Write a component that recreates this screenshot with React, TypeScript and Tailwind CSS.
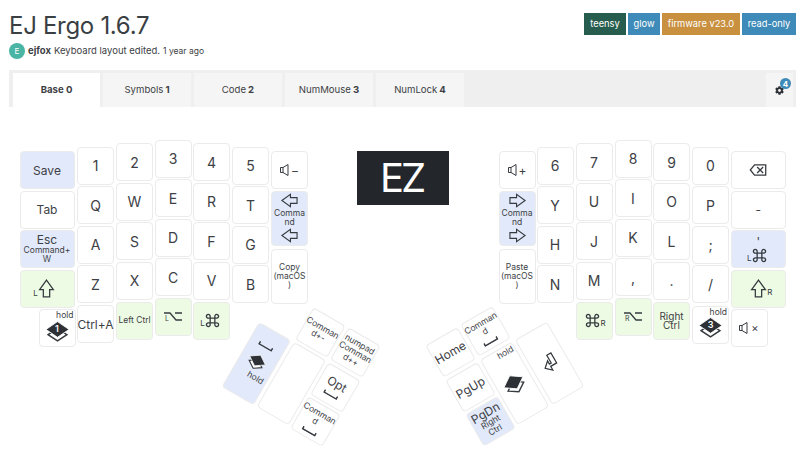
import React from "react";
import { FaCog } from "react-icons/fa";

type Tone = "plain" | "blue" | "green";

interface KeyDef {
  x: number;
  y: number;
  w?: number;
  h?: number;
  tone?: Tone;
  rot?: number;
  node?: React.ReactNode;
}

const KEY_W = 37;
const KEY_H = 38;

const toneClass: Record<Tone, string> = {
  plain: "bg-white",
  blue: "bg-[#e2e9fa]",
  green: "bg-[#eefbe4]",
};

const Ink = "#363b40";

const Arrow = ({ dir, size = 17 }: { dir: "left" | "right" | "up"; size?: number }) => {
  const rotate = dir === "left" ? 0 : dir === "right" ? 180 : 90;
  return (
    <svg width={size} height={size} viewBox="0 0 18 18" style={{ transform: `rotate(${rotate}deg)` }}>
      <path d="M1 9 10 2.5V6h7v6h-7v3.5z" fill="none" stroke={Ink} strokeWidth="1.2" />
    </svg>
  );
};

const Space = ({ w = 16 }: { w?: number }) => (
  <svg width={w} height="4" viewBox="0 0 16 4">
    <path d="M1 0v3h14V0" fill="none" stroke={Ink} strokeWidth="1.5" />
  </svg>
);

const Speaker = () => (
  <svg width="9" height="12" viewBox="0 0 9 12">
    <path d="M.5 3.5h2.5l5-3v11l-5-3H.5zM3 3.5v5" fill="none" stroke={Ink} strokeWidth="1" />
  </svg>
);

const Cmd = ({ size = 15 }: { size?: number }) => (
  <svg width={size} height={size} viewBox="0 0 16 16">
    <path
      d="M5.5 5.5h5v5h-5zM5.5 5.5H3.7a2 2 0 1 1 1.8-2zM10.5 5.5V3.7a2 2 0 1 1 2 1.8zM10.5 10.5h1.8a2 2 0 1 1-1.8 2zM5.5 10.5v1.8a2 2 0 1 1-2-1.8z"
      fill="none"
      stroke={Ink}
      strokeWidth="1.4"
    />
  </svg>
);

const Alt = ({ side }: { side: string }) => (
  <div className="relative">
    <svg className="block" width="18" height="9" viewBox="0 0 18 9">
      <path d="M0 1h6l6 7h6M11 1h7" fill="none" stroke={Ink} strokeWidth="1.3" />
    </svg>
    <span className="absolute left-[1px] top-[3px] text-[7px] leading-[7px]">{side}</span>
  </div>
);

const Layers = ({ n, size = 23 }: { n?: string; size?: number }) => (
  <div className="relative flex items-center justify-center" style={{ width: size, height: size }}>
    <svg width={size} height={size} viewBox="0 0 22 22">
      <path d="M2 15 11 9l9 6-9 6z" fill="#fff" stroke={Ink} strokeWidth="1.4" />
      <path d="M0 10 11 2.5 22 10l-11 7.5z" fill="#2d3136" stroke="#fff" strokeWidth="0.8" />
    </svg>
    {n && <span className="absolute top-[4px] text-[9px] leading-[11px] font-semibold text-white">{n}</span>}
  </div>
);

const Sub = ({ children }: { children: React.ReactNode }) => (
  <span className="text-[8px] leading-[9px] text-[#363b40]">{children}</span>
);

const Small = ({ children }: { children: React.ReactNode }) => (
  <span className="block whitespace-pre-line text-center text-[8.5px] leading-[9px]">{children}</span>
);

const Hold = () => <span className="absolute top-[1px] right-[1px] text-[8.5px] leading-[9px]">hold</span>;

const Key = ({ x, y, w = KEY_W, h = KEY_H, tone = "plain", rot = 0, node }: KeyDef) => (
  <div
    className={`absolute flex flex-col items-center justify-center rounded-[4px] border-[1.5px] border-[#ebebeb] text-[12px] leading-[15px] text-[#3d4145] ${toneClass[tone]}`}
    style={{ left: x, top: y - 107, width: w, height: h, transform: rot ? `rotate(${rot}deg)` : undefined }}
  >
    {node}
  </div>
);

// centre-based helper for the rotated thumb keys
const thumb = (cx: number, cy: number, rot: number, node?: React.ReactNode, tone: Tone = "plain", tall = false): KeyDef => {
  const w = 36.5;
  const h = tall ? 74.5 : 36.5;
  return { x: cx - w / 2, y: cy - h / 2, w, h, rot, tone, node };
};

const cols = [77, 116, 154.5, 193, 232];
const colsR = [536.5, 575.5, 614.5, 653, 692];
const stagger = [146.5, 143, 139.5, 143, 146.5];
const rowStep = 39.5;

const letterKeys = (xs: number[], rows: string[][]): KeyDef[] =>
  rows.flatMap((row, r) =>
    row.map((label, c) => ({
      x: xs[c],
      y: stagger[c] + r * rowStep,
      node: <span className="text-[14px]">{label}</span>,
    })),
  );

const keys: KeyDef[] = [
  // left hand
  { x: 19.5, y: 151, w: 55, tone: "blue", node: "Save" },
  { x: 19.5, y: 190.5, w: 55, node: "Tab" },
  {
    x: 19.5,
    y: 230,
    w: 55,
    tone: "blue",
    node: (
      <>
        <span className="leading-[12px]">Esc</span>
        <Small>{"Command+\nW"}</Small>
      </>
    ),
  },
  {
    x: 19.5,
    y: 269.5,
    w: 55,
    tone: "green",
    node: (
      <div className="flex items-end pr-[5px]">
        <Sub>L</Sub>
        <div className="-ml-[1px]"><Arrow dir="up" size={19} /></div>
      </div>
    ),
  },
  { x: 38.5, y: 309, node: <><Hold /><div className="mt-[4px]"><Layers n="1" /></div></> },
  ...letterKeys(cols, [
    ["1", "2", "3", "4", "5"],
    ["Q", "W", "E", "R", "T"],
    ["A", "S", "D", "F", "G"],
    ["Z", "X", "C", "V", "B"],
  ]),
  { x: 77, y: 305, node: "Ctrl+A" },
  { x: 116, y: 301.5, tone: "green", node: <span className="text-[8.5px] whitespace-nowrap">Left Ctrl</span> },
  { x: 154.5, y: 297.5, tone: "green", node: <Alt side="L" /> },
  {
    x: 193,
    y: 301.5,
    tone: "green",
    node: (
      <div className="flex items-end pr-[3px]">
        <Sub>L</Sub>
        <Cmd />
      </div>
    ),
  },
  {
    x: 271,
    y: 151,
    node: (
      <div className="flex items-center gap-[2px]">
        <Speaker />
        <span>−</span>
      </div>
    ),
  },
  {
    x: 271,
    y: 190.5,
    h: 55.5,
    tone: "blue",
    node: (
      <>
        <Arrow dir="left" />
        <Small>{"Comma\nnd"}</Small>
        <Arrow dir="left" />
      </>
    ),
  },
  { x: 271, y: 248.5, h: 55, node: <Small>{"Copy\n(macOS\n)"}</Small> },

  // left thumb
  thumb(256.5, 363.5, 30, (
    <>
      <Space />
      <div className="mt-[6px] h-[18px]"><Layers size={18} /></div>
      <span className="absolute top-[45px] right-[2px] text-[8.5px] leading-[9px]">hold</span>
      <div className="h-[14px]" />
    </>
  ), "blue", true),
  thumb(291, 383.5, 30, undefined, "plain", true),
  thumb(320, 332, 30, <Small>{"Comman\nd+-"}</Small>),
  thumb(355, 352.5, 30, <Small>{"numpad\nComman\nd++"}</Small>),
  thumb(335.5, 387, 30, (
    <>
      <span>Opt</span>
      <div className="mt-[3px]"><Space /></div>
    </>
  )),
  thumb(315, 421, 30, (
    <>
      <Small>{"Comman\nd"}</Small>
      <div className="mt-[5px]"><Space /></div>
    </>
  )),

  // right hand
  {
    x: 498.5,
    y: 151,
    node: (
      <div className="flex items-center gap-[2px]">
        <Speaker />
        <span>+</span>
      </div>
    ),
  },
  {
    x: 498.5,
    y: 190.5,
    h: 55.5,
    tone: "blue",
    node: (
      <>
        <Arrow dir="right" />
        <Small>{"Comma\nnd"}</Small>
        <Arrow dir="right" />
      </>
    ),
  },
  { x: 498.5, y: 248.5, h: 55, node: <Small>{"Paste\n(macOS\n)"}</Small> },
  ...letterKeys(colsR, [
    ["6", "7", "8", "9", "0"],
    ["Y", "U", "I", "O", "P"],
    ["H", "J", "K", "L", ";"],
    ["N", "M", ",", ".", "/"],
  ]),
  {
    x: 730.5,
    y: 151,
    w: 55.5,
    node: (
      <svg width="18" height="12" viewBox="0 0 20 14">
        <path d="M6 1h13v12H6L1 7zM9 3.5l7 7M16 3.5l-7 7" fill="none" stroke={Ink} strokeWidth="1.5" />
      </svg>
    ),
  },
  { x: 730.5, y: 190.5, w: 55.5, node: "-" },
  {
    x: 730.5,
    y: 230,
    w: 55.5,
    tone: "blue",
    node: (
      <>
        <span className="leading-[12px]">'</span>
        <div className="flex items-end pr-[3px]">
          <Sub>L</Sub>
          <Cmd />
        </div>
      </>
    ),
  },
  {
    x: 730.5,
    y: 269.5,
    w: 55.5,
    tone: "green",
    node: (
      <div className="flex items-end pl-[5px]">
        <Arrow dir="up" size={19} />
        <div className="-ml-[1px]"><Sub>R</Sub></div>
      </div>
    ),
  },
  {
    x: 575.5,
    y: 301.5,
    tone: "green",
    node: (
      <div className="flex items-end pl-[3px]">
        <Cmd />
        <Sub>R</Sub>
      </div>
    ),
  },
  { x: 614.5, y: 297.5, tone: "green", node: <Alt side="R" /> },
  {
    x: 653,
    y: 301.5,
    tone: "green",
    node: <span className="text-center text-[10px] leading-[9px]">Right<br />Ctrl</span>,
  },
  { x: 692, y: 305.5, node: <><Hold /><div className="mt-[4px]"><Layers n="3" /></div></> },
  {
    x: 730.5,
    y: 309,
    node: (
      <div className="flex items-center gap-[3px]">
        <Speaker />
        <span className="text-[11px]">×</span>
      </div>
    ),
  },

  // right thumb
  thumb(450, 352, -30, "Home"),
  thumb(485, 331, -30, (
    <>
      <Small>{"Comman\nd"}</Small>
      <div className="mt-[5px]"><Space /></div>
    </>
  )),
  thumb(470, 387, -30, "PgUp"),
  thumb(490, 421, -30, (
    <>
      <span className="leading-[12px]">PgDn</span>
      <Small>{"Right\nCtrl"}</Small>
    </>
  ), "blue"),
  thumb(514.5, 383, -30, (
    <>
      <Hold />
      <Layers size={22} />
    </>
  ), "plain", true),
  thumb(549, 363, -30, (
    <svg width="15" height="19" viewBox="0 0 14 18">
      <path d="M8.5 1H13v11H6.5v4L1 11l5.5-5v3.5h2z" fill="none" stroke={Ink} strokeWidth="1.2" />
    </svg>
  ), "plain", true),
];

const tabs = [
  ["Symbols", "1"],
  ["Code", "2"],
  ["NumMouse", "3"],
  ["NumLock", "4"],
];

const badges = [
  { label: "teensy", cls: "bg-[#275d4e] w-[42px]" },
  { label: "glow", cls: "bg-[#3e8ab8] w-[32px]" },
  { label: "firmware v23.0", cls: "bg-[#c8903f] w-[78px]" },
  { label: "read-only", cls: "bg-[#3e8ab8] w-[54px]" },
];

export default function App() {
  return (
    <div className="w-[800px] h-[470px] overflow-hidden bg-white font-['Inter',sans-serif] text-[#3d4145]">
      <header className="flex justify-between pl-[9px] pr-[4px] pt-[13px] h-[70px]">
        <div>
          <h1 className="text-[24px] leading-[25px] font-normal tracking-[-0.3px] text-[#3a3f44]">EJ Ergo 1.6.7</h1>
          <div className="mt-[5px] flex items-center gap-[3px] text-[9.5px]">
            <span className="flex h-[16px] w-[16px] items-center justify-center rounded-full bg-[#4bb5a5] text-[8px] text-white">E</span>
            <span className="font-bold">ejfox</span>
            <span>Keyboard layout edited.</span>
            <span className="text-[8.5px]">1 year ago</span>
          </div>
        </div>
        <div className="flex gap-[2px] h-[22px]">
          {badges.map((b) => (
            <span key={b.label} className={`flex items-center justify-center text-[9.3px] text-white ${b.cls}`}>
              {b.label}
            </span>
          ))}
        </div>
      </header>

      <nav className="mx-[9px] w-[787px] h-[37px] flex items-end justify-between bg-[#efefef] pl-[4px] pr-[3px] text-[9.6px]">
        <div className="flex gap-[3px]">
          <div className="flex h-[34px] w-[87px] items-center justify-center bg-white font-bold">Base 0</div>
          {tabs.map(([name, n]) => (
            <div key={name} className="flex h-[34px] w-[88px] items-center justify-center gap-[2px] bg-[#f5f5f5]">
              {name} <b>{n}</b>
            </div>
          ))}
        </div>
        <div className="relative flex h-[34px] w-[27px] items-center justify-center bg-[#f5f5f5]">
          <FaCog size={9} color="#2d3136" />
          <span className="absolute top-[5px] left-[14px] flex h-[11px] w-[11px] items-center justify-center rounded-full bg-[#3e8ab8] text-[8px] font-bold text-white">
            4
          </span>
        </div>
      </nav>

      <main className="relative h-[363px]">
        {keys.map((k, i) => (
          <Key key={i} {...k} />
        ))}
        <div className="absolute left-[357px] top-[44px] flex h-[54px] w-[92px] items-center justify-center bg-[#23272b] pr-[3px] text-[40px] tracking-[-3px] text-white">
          EZ
        </div>
      </main>
    </div>
  );
}
